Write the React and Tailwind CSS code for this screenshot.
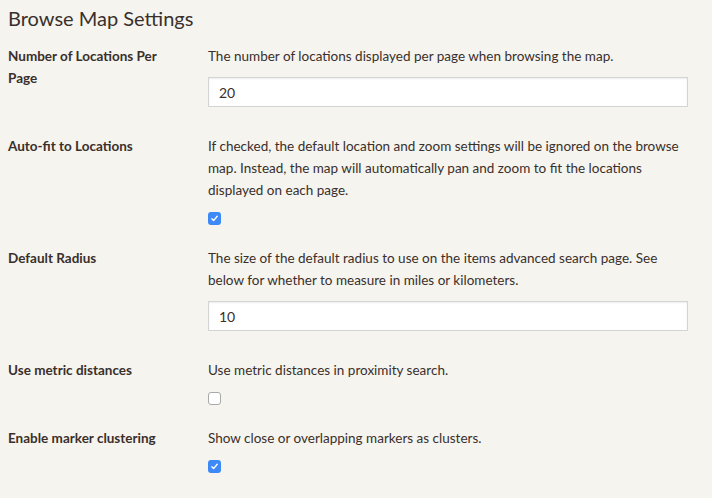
import React from "react";

function Checkbox({ checked }) {
  if (checked) {
    return (
      <span className="flex h-[13px] w-[13px] items-center justify-center rounded-[3px] bg-[#3d8af7]">
        <svg width="9" height="9" viewBox="0 0 9 9">
          <path d="M1.8 4.8 L3.6 6.6 L7.2 2.2" fill="none" stroke="#fff" strokeWidth="1.4" strokeLinecap="round" strokeLinejoin="round" />
        </svg>
      </span>
    );
  }
  return <span className="block h-[13px] w-[13px] rounded-[3px] border border-[#a9a9a9] bg-white" />;
}

function Row({ label, desc, children }) {
  return (
    <div className="flex">
      <div className="w-[200px] shrink-0 pr-[22px] font-bold leading-[22px]">{label}</div>
      <div className="w-[480px]">
        <p className="leading-[22px]">{desc}</p>
        {children}
      </div>
    </div>
  );
}

function TextInput({ value }) {
  return (
    <div className="mt-[10px] mb-[28px] flex h-[30px] items-center border border-[#d4d4d4] bg-white pl-[10px] text-[14px] shadow-[inset_0_1px_2px_rgba(0,0,0,0.08)]">
      {value}
    </div>
  );
}

function CheckRow({ checked }) {
  return (
    <div className="mt-[11px] mb-[22px]">
      <Checkbox checked={checked} />
    </div>
  );
}

export default function App() {
  return (
    <div
      className="min-h-[498px] w-[712px] bg-[#f5f4ef] pl-[8px] text-[13.5px] text-[#3a2f2b]"
      style={{ fontFamily: "Lato, 'Open Sans', sans-serif" }}
    >
      <h1 className="pt-[4px] text-[20px] leading-[28px]">Browse Map Settings</h1>
      <div className="mt-[13px]">
        <Row
          label="Number of Locations Per Page"
          desc="The number of locations displayed per page when browsing the map."
        >
          <TextInput value="20" />
        </Row>
        <Row
          label="Auto-fit to Locations"
          desc="If checked, the default location and zoom settings will be ignored on the browse map. Instead, the map will automatically pan and zoom to fit the locations displayed on each page."
        >
          <CheckRow checked />
        </Row>
        <Row
          label="Default Radius"
          desc="The size of the default radius to use on the items advanced search page. See below for whether to measure in miles or kilometers."
        >
          <TextInput value="10" />
        </Row>
        <Row label="Use metric distances" desc="Use metric distances in proximity search.">
          <CheckRow checked={false} />
        </Row>
        <Row label="Enable marker clustering" desc="Show close or overlapping markers as clusters.">
          <CheckRow checked />
        </Row>
      </div>
    </div>
  );
}
